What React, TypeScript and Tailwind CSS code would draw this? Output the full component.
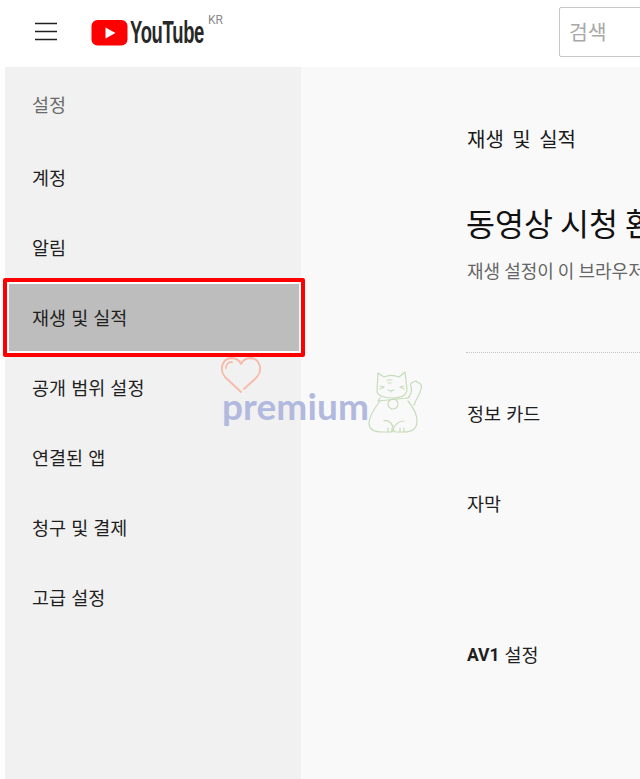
import React from "react";

const font = { fontFamily: '"Noto Sans CJK KR", sans-serif' };

function Header() {
  return (
    <header className="flex h-[67px] items-center bg-white">
      <svg width="24" height="20" viewBox="0 0 24 20" className="ml-[34px] mb-[4px] shrink-0">
        <path d="M1 1.5h22M1 9.5h22M1 17.5h22" stroke="#212121" strokeWidth="1.6" fill="none" />
      </svg>
      <div className="relative ml-[33px] mb-[2px] flex h-[48px] w-[140px] shrink-0 items-center">
        <svg width="37" height="26" viewBox="0 0 37 26" className="shrink-0">
          <rect x="0.5" y="0" width="36" height="25.5" rx="6" fill="#ff0000" />
          <path d="M14.5 7.5 24.5 13 14.5 18.5Z" fill="#fff" />
        </svg>
        <span
          className="ml-[2px] origin-left scale-x-[0.595] text-[31px] font-bold leading-none tracking-[-0.5px] text-[#282828]"
          style={{ fontFamily: '"Liberation Sans", sans-serif' }}
        >
          YouTube
        </span>
        <span
          className="absolute left-[117px] top-[5px] text-[12px] leading-none text-[#8a8a8a]"
          style={{ fontFamily: '"Roboto", sans-serif' }}
        >
          KR
        </span>
      </div>
      <div className="ml-[328px] mb-[3px] flex h-[50px] w-[120px] shrink-0 items-center rounded-[2px] border border-[#c8c8c8] pb-[2px] pl-[9px] text-[20.5px] text-[#a8a8a8]">
        검색
      </div>
    </header>
  );
}

function SideItem({ label, active }: { label: string; active?: boolean }) {
  return (
    <div className="relative flex h-[70px] items-center pl-[27px] text-[18.5px] [word-spacing:1px] text-[#1f1f1f]">
      {active && (
        <div className="absolute -left-[2px] -top-[5px] h-[79px] w-[302px] rounded-[2px] border-4 border-[#ff0000] bg-white p-[2px]">
          <div className="h-full w-full bg-[#bdbdbd]" />
        </div>
      )}
      <span className="relative">{label}</span>
    </div>
  );
}

function Sidebar() {
  const items = ["계정", "알림", "재생 및 실적", "공개 범위 설정", "연결된 앱", "청구 및 결제", "고급 설정"];
  return (
    <aside className="ml-[5px] w-[296px] shrink-0 bg-[#f1f1f1]">
      <div className="flex h-[76px] items-center pl-[27px] text-[18.5px] text-[#6b6b6b]">설정</div>
      {items.map((t) => (
        <SideItem key={t} label={t} active={t === "재생 및 실적"} />
      ))}
    </aside>
  );
}

function Main() {
  return (
    <main className="min-w-0 flex-1 overflow-hidden whitespace-nowrap bg-[#f9f9f9] pl-[165px]">
      <div className="flex h-[141px] items-center pl-[1px] pt-[3px] text-[20px] [word-spacing:4px] text-[#1a1a1a]">재생 및 실적</div>
      <div className="text-[31.5px] leading-[28px] text-[#111]">동영상 시청 환경 설정</div>
      <div className="mt-[24px] pl-[1px] text-[18px] leading-[20px] text-[#666]">재생 설정이 이 브라우저에서 적용됩니다</div>
      <div className="mt-[72px] border-t border-dotted border-[#c4c4c4]" />
      <div className="flex h-[122px] items-center pl-[1px] text-[18.5px] [word-spacing:1px] text-[#1f1f1f]">정보 카드</div>
      <div className="flex h-[58px] items-center pl-[1px] text-[18.5px] text-[#1f1f1f]">자막</div>
      <div className="mt-[94px] flex h-[56px] items-center pl-[1px] text-[18.5px] text-[#1f1f1f]">
        <span className="text-[17.5px] font-bold" style={{ fontFamily: '"Roboto", sans-serif' }}>AV1</span>
        <span className="ml-[5px]">설정</span>
      </div>
    </main>
  );
}

function Watermark() {
  return (
    <div className="pointer-events-none absolute left-[220px] top-[356px] h-[80px] w-[202px]">
      <svg width="42" height="38" viewBox="0 0 42 38" className="absolute left-0 top-0" fill="none" stroke="#f8b9a9" strokeWidth="1.8" strokeLinecap="round" strokeLinejoin="round">
        <path d="M21 36 5 21C-1 14 2 3 11 2c5 0 8 2 10 6 2-4 6-6 10-6 9 1 12 12 6 19L24 33" />
        <path d="M6 12c0-3 2-6 6-6" />
      </svg>
      <span
        className="absolute left-[2px] top-[28px] text-[37px] font-bold leading-[44px] tracking-[0.1px] text-[#b2b9de]"
        style={{ fontFamily: '"Lato", sans-serif' }}
      >
        premium
      </span>
      <svg width="54" height="62" viewBox="0 0 54 62" className="absolute left-[148px] top-[15px]" fill="none" stroke="#c6dcb9" strokeWidth="1.2" strokeLinecap="round" strokeLinejoin="round">
        <path d="M10 2 9 20c0 4 6 7 15 7s15-3 15-9L37 1l-6 5c-5-2-11-2-15 0Z" />
        <path d="M19 9h5M20 12h3M12 15l4 1-4 2M36 15l-4 1 4 2M20 19l3 1 3-1M23 20v1" />
        <path d="M12 27l-2 3 30-3 1-1-2 1" />
        <circle cx="25" cy="33" r="5" />
        <path d="M12 30C6 38 1 46 1 52c0 6 5 9 13 9h8c3 0 4-2 3-5-1-4-6-8-9-6" />
        <path d="M40 30c5 6 9 12 9 20 0 8-6 11-13 11h-8c-3 0-3-3-2-5 2-3 6-6 10-6" />
        <path d="M41 26c2-3 3-7 2-10-1-2 0-4 2-5l3-1 1 1 2 1c2 1 3 3 2 6-1 6-5 10-7 16" />
        <path d="M20 61v-4M24 61v-4M32 61v-4M36 61v-4" />
      </svg>
    </div>
  );
}

export default function App() {
  return (
    <div className="relative h-[779px] w-[640px] overflow-hidden bg-white" style={font}>
      <Header />
      <div className="flex h-[712px]">
        <Sidebar />
        <Main />
      </div>
      <Watermark />
    </div>
  );
}
